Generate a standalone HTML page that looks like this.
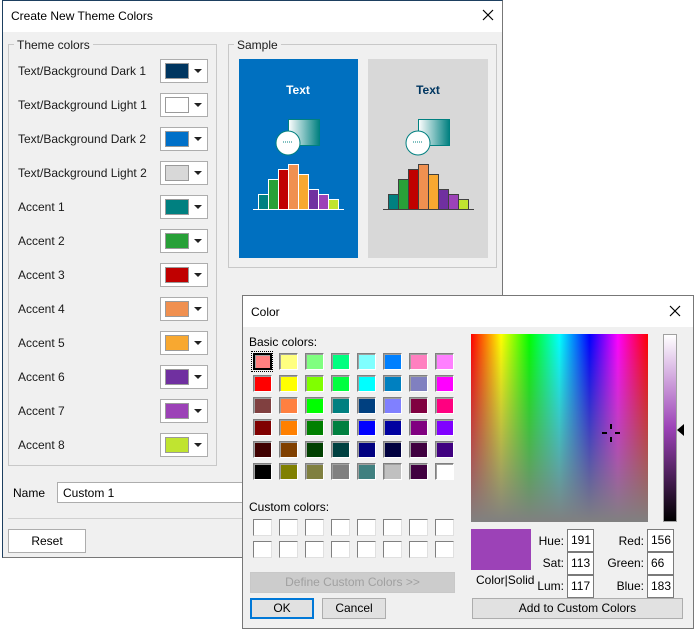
<!DOCTYPE html>
<html><head><meta charset="utf-8"><style>
*{box-sizing:border-box;margin:0;padding:0}
body{width:694px;height:629px;background:#fff;font-family:"Liberation Sans",sans-serif;font-size:12px;color:#000;position:relative;overflow:hidden}
.a{position:absolute}
.lbl{position:absolute;left:18px;font-size:12px;color:#1a1a1a}
.pk{position:absolute;left:160px;width:48px;height:24px;background:#fff;border:1px solid #adadad}
.pk i{position:absolute;left:4px;top:3px;width:24px;height:16px;border:1px solid #9a9a9a}
.pk b{position:absolute;left:33px;top:9px;width:0;height:0;border-left:4px solid transparent;border-right:4px solid transparent;border-top:4px solid #222}
.sw{position:absolute;width:19px;height:17px;border:1px solid;border-color:#808080 #fff #fff #808080;box-shadow:inset 1px 1px 0 #a0a0a0}
.cc{position:absolute;width:19px;height:17px;background:#fff;border:1px solid;border-color:#808080 #e0e0e0 #e0e0e0 #808080}
.in{position:absolute;width:27px;height:23px;background:#fff;border:1px solid #7a7a7a;font-size:12px;padding:3px 0 0 3px}
.rl{position:absolute;font-size:12px;text-align:right}
.btn{position:absolute;background:#e1e1e1;border:1px solid #adadad;text-align:center;font-size:12px;line-height:19px}
</style></head><body>
<!-- main dialog -->
<div class="a" style="left:2px;top:0;width:501px;height:558px;background:#f0f0f0;border:1px solid #1d3f60;border-bottom-color:#777;border-right-color:#777"></div>
<div class="a" style="left:3px;top:1px;width:499px;height:31px;background:#fff"></div>
<div class="a" style="left:11px;top:9px;font-size:12px">Create New Theme Colors</div>
<svg class="a" style="left:482px;top:9px" width="12" height="12"><path d="M1 1L11 11M11 1L1 11" stroke="#000" stroke-width="1.2"/></svg>
<div class="a" style="left:8px;top:44px;width:209px;height:422px;border:1px solid #c8c8c8"></div>
<div class="a" style="left:14px;top:38px;background:#f0f0f0;padding:0 3px;color:#1a1a1a">Theme colors</div>
<div class="lbl" style="top:64px">Text/Background Dark 1</div><div class="pk" style="top:59px"><i style="background:#003660"></i><b></b></div>
<div class="lbl" style="top:98px">Text/Background Light 1</div><div class="pk" style="top:93px"><i style="background:#fff"></i><b></b></div>
<div class="lbl" style="top:132px">Text/Background Dark 2</div><div class="pk" style="top:127px"><i style="background:#0070c8"></i><b></b></div>
<div class="lbl" style="top:166px">Text/Background Light 2</div><div class="pk" style="top:161px"><i style="background:#d8d8d8"></i><b></b></div>
<div class="lbl" style="top:200px">Accent 1</div><div class="pk" style="top:195px"><i style="background:#008080"></i><b></b></div>
<div class="lbl" style="top:234px">Accent 2</div><div class="pk" style="top:229px"><i style="background:#28a038"></i><b></b></div>
<div class="lbl" style="top:268px">Accent 3</div><div class="pk" style="top:263px"><i style="background:#c00000"></i><b></b></div>
<div class="lbl" style="top:302px">Accent 4</div><div class="pk" style="top:297px"><i style="background:#f09050"></i><b></b></div>
<div class="lbl" style="top:336px">Accent 5</div><div class="pk" style="top:331px"><i style="background:#f8a830"></i><b></b></div>
<div class="lbl" style="top:370px">Accent 6</div><div class="pk" style="top:365px"><i style="background:#7030a0"></i><b></b></div>
<div class="lbl" style="top:404px">Accent 7</div><div class="pk" style="top:399px"><i style="background:#9c42b7"></i><b></b></div>
<div class="lbl" style="top:438px">Accent 8</div><div class="pk" style="top:433px"><i style="background:#c0e430"></i><b></b></div>
<div class="a" style="left:228px;top:44px;width:269px;height:224px;border:1px solid #c8c8c8"></div>
<div class="a" style="left:234px;top:38px;background:#f0f0f0;padding:0 3px;color:#1a1a1a">Sample</div>
<svg class="a" style="left:239px;top:59px" width="250" height="200">
<defs><linearGradient id="g" x1="0" x2="1"><stop offset="0" stop-color="#fff"/><stop offset="1" stop-color="#008080"/></linearGradient></defs>
<rect x="0" y="0" width="119" height="199" fill="#0070c0"/>
<rect x="129" y="0" width="120" height="199" fill="#d8d8d8"/>
<text x="59" y="35" text-anchor="middle" font-family="Liberation Sans" font-weight="bold" font-size="12" fill="#fff">Text</text>
<text x="189" y="35" text-anchor="middle" font-family="Liberation Sans" font-weight="bold" font-size="12" fill="#003660">Text</text>
<g>
<rect x="49.5" y="60.5" width="31" height="26" fill="url(#g)" stroke="#008080"/>
<circle cx="49" cy="84" r="12" fill="#fff" stroke="#008080"/>
<path d="M44 83h10" stroke="#008080" stroke-dasharray="1 1"/>
<g stroke="#fff"><rect x="19.5" y="135.5" width="10" height="15" fill="#008080"/><rect x="29.5" y="120.5" width="10" height="30" fill="#28a038"/><rect x="39.5" y="110.5" width="10" height="40" fill="#c00000"/><rect x="49.5" y="105.5" width="10" height="45" fill="#f09050"/><rect x="59.5" y="115.5" width="10" height="35" fill="#f8a830"/><rect x="69.5" y="130.5" width="10" height="20" fill="#7030a0"/><rect x="79.5" y="135.5" width="10" height="15" fill="#9c42b7"/><rect x="89.5" y="140.5" width="10" height="10" fill="#c0e430"/></g>
<path d="M14 150.5h91" stroke="#fff"/>
</g>
<g transform="translate(130,0)">
<rect x="49.5" y="60.5" width="31" height="26" fill="url(#g)" stroke="#008080"/>
<circle cx="49" cy="84" r="12" fill="#fff" stroke="#008080"/>
<path d="M44 83h10" stroke="#008080" stroke-dasharray="1 1"/>
<g stroke="#404040"><rect x="19.5" y="135.5" width="10" height="15" fill="#008080"/><rect x="29.5" y="120.5" width="10" height="30" fill="#28a038"/><rect x="39.5" y="110.5" width="10" height="40" fill="#c00000"/><rect x="49.5" y="105.5" width="10" height="45" fill="#f09050"/><rect x="59.5" y="115.5" width="10" height="35" fill="#f8a830"/><rect x="69.5" y="130.5" width="10" height="20" fill="#7030a0"/><rect x="79.5" y="135.5" width="10" height="15" fill="#9c42b7"/><rect x="89.5" y="140.5" width="10" height="10" fill="#c0e430"/></g>
<path d="M14 150.5h91" stroke="#404040"/>
</g>
</svg>
<div class="a" style="left:13px;top:486px">Name</div>
<div class="a" style="left:57px;top:482px;width:200px;height:21px;background:#fff;border:1px solid #adadad;padding:3px 0 0 5px">Custom 1</div>
<div class="a" style="left:8px;top:518px;width:494px;height:1px;background:#d0d0d0"></div>
<div class="a" style="left:8px;top:529px;width:78px;height:24px;background:#fff;border:1px solid #adadad;text-align:center;line-height:22px">Reset</div>

<!-- color dialog -->
<div class="a" style="left:242px;top:295px;width:452px;height:334px;background:#f0f0f0;border:1px solid #777"></div>
<div class="a" style="left:243px;top:296px;width:450px;height:31px;background:#fff"></div>
<div class="a" style="left:251px;top:305px;font-size:12px">Color</div>
<svg class="a" style="left:669px;top:305px" width="12" height="12"><path d="M1 1L11 11M11 1L1 11" stroke="#000" stroke-width="1.2"/></svg>
<div class="a" style="left:249px;top:335px">Basic colors:</div>
<div id="bc"></div>
<div class="a" style="left:249px;top:500px">Custom colors:</div>
<div class="btn" style="left:250px;top:572px;width:205px;height:21px;color:#a0a0a0;background:#ccc;border-color:#c8c8c8">Define Custom Colors &gt;&gt;</div>
<div class="btn" style="left:250px;top:598px;width:64px;height:21px;border:2px solid #0078d7;line-height:17px">OK</div>
<div class="btn" style="left:322px;top:598px;width:64px;height:21px">Cancel</div>
<div class="a" style="left:471px;top:334px;width:177px;height:188px;background:linear-gradient(to bottom,rgba(128,128,128,0),#808080),linear-gradient(to right,#f00,#ff0 17%,#0f0 33%,#0ff 50%,#00f 67%,#f0f 83%,#f00)"></div>
<svg class="a" style="left:601px;top:423px" width="20" height="20"><path d="M10 1v5M10 14v5M1 10h5M14 10h5" stroke="#000" stroke-width="2"/></svg>
<div class="a" style="left:663px;top:334px;width:14px;height:188px;border:1px solid #a0a0a0;background:linear-gradient(#fff,#9c42b7 50%,#000)"></div>
<div class="a" style="left:677px;top:424px;width:0;height:0;border-top:6px solid transparent;border-bottom:6px solid transparent;border-right:7px solid #000"></div>
<div class="a" style="left:471px;top:529px;width:60px;height:41px;background:#9c42b7"></div>
<div class="a" style="left:476px;top:573px">Color|Solid</div>
<div class="rl" style="left:531px;top:534px;width:33px">Hue:</div><div class="in" style="left:567px;top:529px">191</div>
<div class="rl" style="left:531px;top:556px;width:33px">Sat:</div><div class="in" style="left:567px;top:552px">113</div>
<div class="rl" style="left:531px;top:579px;width:33px">Lum:</div><div class="in" style="left:567px;top:575px">117</div>
<div class="rl" style="left:600px;top:534px;width:44px">Red:</div><div class="in" style="left:647px;top:529px">156</div>
<div class="rl" style="left:600px;top:556px;width:44px">Green:</div><div class="in" style="left:647px;top:552px">66</div>
<div class="rl" style="left:600px;top:579px;width:44px">Blue:</div><div class="in" style="left:647px;top:575px">183</div>
<div class="btn" style="left:472px;top:598px;width:211px;height:21px">Add to Custom Colors</div>

<div class="a" style="left:251px;top:351px;width:22px;height:21px;border:1px dotted #000"></div>
<div class="sw" style="left:253px;top:353px;background:#ff8080;border:2px solid #000"></div>
<div class="sw" style="left:279px;top:353px;background:#ffff80"></div>
<div class="sw" style="left:305px;top:353px;background:#80ff80"></div>
<div class="sw" style="left:331px;top:353px;background:#00ff80"></div>
<div class="sw" style="left:357px;top:353px;background:#80ffff"></div>
<div class="sw" style="left:383px;top:353px;background:#0080ff"></div>
<div class="sw" style="left:409px;top:353px;background:#ff80c0"></div>
<div class="sw" style="left:435px;top:353px;background:#ff80ff"></div>
<div class="sw" style="left:253px;top:375px;background:#ff0000"></div>
<div class="sw" style="left:279px;top:375px;background:#ffff00"></div>
<div class="sw" style="left:305px;top:375px;background:#80ff00"></div>
<div class="sw" style="left:331px;top:375px;background:#00ff40"></div>
<div class="sw" style="left:357px;top:375px;background:#00ffff"></div>
<div class="sw" style="left:383px;top:375px;background:#0080c0"></div>
<div class="sw" style="left:409px;top:375px;background:#8080c0"></div>
<div class="sw" style="left:435px;top:375px;background:#ff00ff"></div>
<div class="sw" style="left:253px;top:397px;background:#804040"></div>
<div class="sw" style="left:279px;top:397px;background:#ff8040"></div>
<div class="sw" style="left:305px;top:397px;background:#00ff00"></div>
<div class="sw" style="left:331px;top:397px;background:#008080"></div>
<div class="sw" style="left:357px;top:397px;background:#004080"></div>
<div class="sw" style="left:383px;top:397px;background:#8080ff"></div>
<div class="sw" style="left:409px;top:397px;background:#800040"></div>
<div class="sw" style="left:435px;top:397px;background:#ff0080"></div>
<div class="sw" style="left:253px;top:419px;background:#800000"></div>
<div class="sw" style="left:279px;top:419px;background:#ff8000"></div>
<div class="sw" style="left:305px;top:419px;background:#008000"></div>
<div class="sw" style="left:331px;top:419px;background:#008040"></div>
<div class="sw" style="left:357px;top:419px;background:#0000ff"></div>
<div class="sw" style="left:383px;top:419px;background:#0000a0"></div>
<div class="sw" style="left:409px;top:419px;background:#800080"></div>
<div class="sw" style="left:435px;top:419px;background:#8000ff"></div>
<div class="sw" style="left:253px;top:441px;background:#400000"></div>
<div class="sw" style="left:279px;top:441px;background:#804000"></div>
<div class="sw" style="left:305px;top:441px;background:#004000"></div>
<div class="sw" style="left:331px;top:441px;background:#004040"></div>
<div class="sw" style="left:357px;top:441px;background:#000080"></div>
<div class="sw" style="left:383px;top:441px;background:#000040"></div>
<div class="sw" style="left:409px;top:441px;background:#400040"></div>
<div class="sw" style="left:435px;top:441px;background:#400080"></div>
<div class="sw" style="left:253px;top:463px;background:#000000"></div>
<div class="sw" style="left:279px;top:463px;background:#808000"></div>
<div class="sw" style="left:305px;top:463px;background:#808040"></div>
<div class="sw" style="left:331px;top:463px;background:#808080"></div>
<div class="sw" style="left:357px;top:463px;background:#408080"></div>
<div class="sw" style="left:383px;top:463px;background:#c0c0c0"></div>
<div class="sw" style="left:409px;top:463px;background:#400040"></div>
<div class="sw" style="left:435px;top:463px;background:#ffffff"></div>
<div class="cc" style="left:253px;top:519px"></div><div class="cc" style="left:279px;top:519px"></div><div class="cc" style="left:305px;top:519px"></div><div class="cc" style="left:331px;top:519px"></div><div class="cc" style="left:357px;top:519px"></div><div class="cc" style="left:383px;top:519px"></div><div class="cc" style="left:409px;top:519px"></div><div class="cc" style="left:435px;top:519px"></div>
<div class="cc" style="left:253px;top:541px"></div><div class="cc" style="left:279px;top:541px"></div><div class="cc" style="left:305px;top:541px"></div><div class="cc" style="left:331px;top:541px"></div><div class="cc" style="left:357px;top:541px"></div><div class="cc" style="left:383px;top:541px"></div><div class="cc" style="left:409px;top:541px"></div><div class="cc" style="left:435px;top:541px"></div>
</body></html>
